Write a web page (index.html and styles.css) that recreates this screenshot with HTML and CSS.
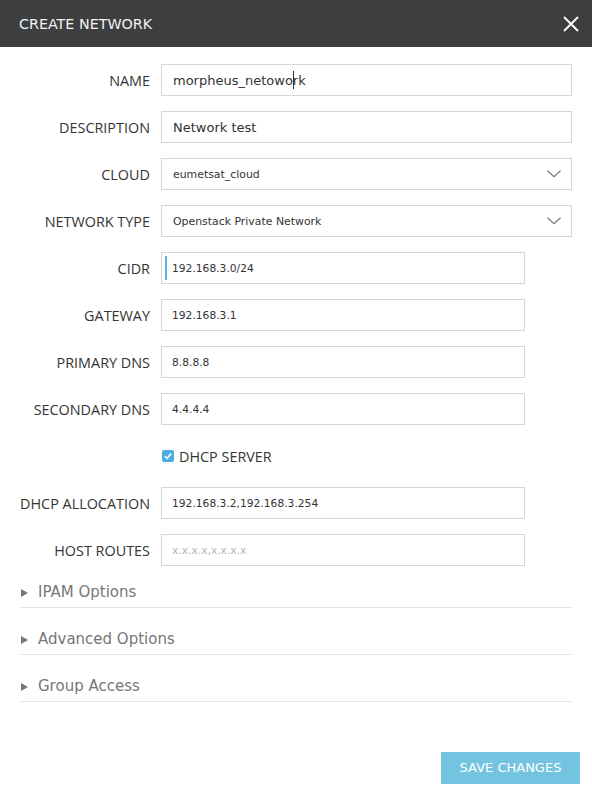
FILE: index.html
```html
<!DOCTYPE html>
<html>
<head>
<meta charset="utf-8">
<link rel="stylesheet" href="styles.css">
</head>
<body>
<div class="modal">
  <div class="header">
    <span class="title">CREATE NETWORK</span>
    <svg class="close" width="16" height="16" viewBox="0 0 16 16"><path d="M1 1 L15 15 M15 1 L1 15" stroke="#fff" stroke-width="1.8" fill="none"/></svg>
  </div>
  <div class="form">
    <div class="row"><label>NAME</label><div class="field wide big">morpheus_netowo<span class="caret"></span>rk</div></div>
    <div class="row"><label>DESCRIPTION</label><div class="field wide big">Network test</div></div>
    <div class="row"><label>CLOUD</label><div class="field wide select">eumetsat_cloud<svg class="chev" width="14" height="8" viewBox="0 0 14 8"><path d="M0.5 0.8 L7 6.8 L13.5 0.8" stroke="#777" stroke-width="1.2" fill="none"/></svg></div></div>
    <div class="row"><label>NETWORK TYPE</label><div class="field wide select">Openstack Private Network<svg class="chev" width="14" height="8" viewBox="0 0 14 8"><path d="M0.5 0.8 L7 6.8 L13.5 0.8" stroke="#777" stroke-width="1.2" fill="none"/></svg></div></div>
    <div class="row"><label>CIDR</label><div class="field narrow focused">192.168.3.0/24</div></div>
    <div class="row"><label>GATEWAY</label><div class="field narrow">192.168.3.1</div></div>
    <div class="row"><label>PRIMARY DNS</label><div class="field narrow">8.8.8.8</div></div>
    <div class="row"><label>SECONDARY DNS</label><div class="field narrow">4.4.4.4</div></div>
    <div class="row"><span></span><div class="check"><span class="box"><svg width="12" height="12" viewBox="0 0 12 12"><path d="M2.8 6.2 L5 8.4 L9.3 3.6" stroke="#fff" stroke-width="1.6" fill="none"/></svg></span>DHCP SERVER</div></div>
    <div class="row"><label>DHCP ALLOCATION</label><div class="field narrow">192.168.3.2,192.168.3.254</div></div>
    <div class="row"><label>HOST ROUTES</label><div class="field narrow placeholder">x.x.x.x,x.x.x.x</div></div>
  </div>
  <div class="sections">
    <div class="section"><span class="tri"></span>IPAM Options</div>
    <div class="section"><span class="tri"></span>Advanced Options</div>
    <div class="section"><span class="tri"></span>Group Access</div>
  </div>
  <div class="footer"><button class="save">SAVE CHANGES</button></div>
</div>
</body>
</html>
```

FILE: styles.css
```css
html, body { margin: 0; padding: 0; background: #fff; }
body { font-family: "DejaVu Sans", sans-serif; color: #333; width: 592px; height: 794px; overflow: hidden; }
.header { height: 47px; background: #3d3e40; display: flex; align-items: center; justify-content: space-between; padding: 0 13px 0 19px; }
.title { color: #f2f2f2; font-size: 14.3px; font-family: "DejaVu Sans", sans-serif; margin-top: 1px; }
.close { display: block; margin-top: 1px; }
.form { padding-top: 17px; display: flex; flex-direction: column; gap: 15px; }
.row { display: grid; grid-template-columns: 150px 1fr; column-gap: 11px; align-items: center; height: 32px; }
.row label { text-align: right; font-size: 14.4px; font-family: "Open Sans", "DejaVu Sans", sans-serif; color: #333; }
.field { box-sizing: border-box; height: 32px; border: 1px solid #d6d6d6; padding: 0 10px; display: flex; align-items: center; font-size: 10.7px; color: #333; position: relative; }
.field.big { font-size: 13px; padding-left: 11px; }
.field.wide { width: 411px; }
.field.narrow { width: 364px; }
.field.select { justify-content: space-between; padding-left: 11px; padding-right: 10px; font-size: 10.9px; }
.field.placeholder { color: #b5b5b5; }
.caret { display: inline-block; width: 1px; height: 18px; background: #333; margin: 0 -1px 0 0; }
.focused::before { content: ""; position: absolute; left: 3px; top: 3px; bottom: 3px; width: 2px; background: #5bb8dc; }
.check { display: flex; align-items: center; font-size: 14.4px; font-family: "Open Sans", "DejaVu Sans", sans-serif; color: #333; }
.box { width: 12px; height: 12px; background: #4aaee0; border-radius: 2px; margin: 0 5px 0 1px; display: flex; }
.sections { padding: 12px 20px 0 20px; width: 552px; }
.section { height: 29px; line-height: 29px; border-bottom: 1px solid #e3e3e3; font-size: 15px; color: #777; display: flex; align-items: center; margin-bottom: 17px; }
.tri { width: 0; height: 0; border-left: 7px solid #777; border-top: 4px solid transparent; border-bottom: 4px solid transparent; margin: 0 10px 0 1px; }
.footer { display: flex; justify-content: flex-end; padding: 33px 12px 0 0; }
.save { width: 139px; height: 32px; border: none; background: #74c4e1; color: #fff; font-family: "DejaVu Sans", sans-serif; font-size: 13px; padding: 0 0 2px 0; }
```
